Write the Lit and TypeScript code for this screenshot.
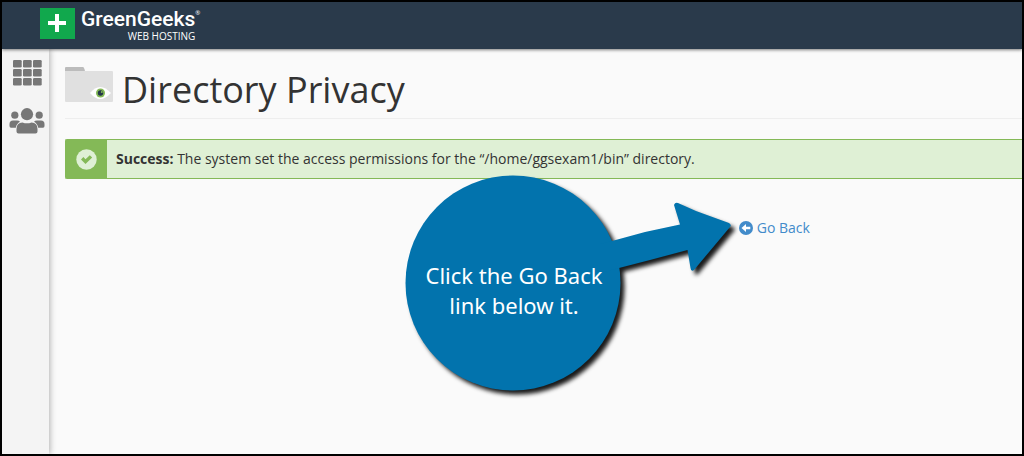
import { LitElement, html, css, svg } from "lit";
import { customElement, property } from "lit/decorators.js";

@customElement("site-header")
class SiteHeader extends LitElement {
  static styles = css`
    :host {
      display: flex;
      align-items: flex-start;
      padding: 6px 38px 0;
      height: 47px;
      box-sizing: border-box;
      background: #2a3a4b;
      color: #fff;
      position: relative;
      z-index: 2;
      box-shadow: 0 1px 3px rgba(0, 0, 0, 0.5);
    }
    .brand {
      display: flex;
      gap: 6px;
      color: inherit;
      text-decoration: none;
    }
    .mark {
      width: 35px;
      height: 31px;
      display: block;
    }
    .words {
      display: flex;
      flex-direction: column;
      align-items: flex-end;
    }
    .name {
      font: 500 21px/22px Roboto, sans-serif;
      display: flex;
    }
    .reg {
      font: 400 6px/8px "Open Sans", sans-serif;
      padding-top: 1px;
    }
    .tag {
      font: 400 10px/12px "Open Sans", sans-serif;
      padding-right: 5px;
    }
  `;
  render() {
    return html`
      <a class="brand" href="#">
        <svg class="mark" viewBox="0 0 35 31" aria-hidden="true">
          <rect width="35" height="31" fill="#11a84d" />
          <path d="M15 6h4v7h7v4h-7v7h-4v-7H8v-4h7z" fill="#fff" />
        </svg>
        <span class="words">
          <span class="name">GreenGeeks<span class="reg">®</span></span>
          <span class="tag">WEB HOSTING</span>
        </span>
      </a>
    `;
  }
}

@customElement("side-nav")
class SideNav extends LitElement {
  static styles = css`
    :host {
      display: flex;
      flex-direction: column;
      align-items: center;
      gap: 22px;
      padding: 11px 0 0 3px;
      background: #f4f4f4;
      box-shadow: 1px 0 6px rgba(0, 0, 0, 0.3);
    }
    .item {
      display: block;
      line-height: 0;
      color: #777;
    }
  `;
  render() {
    const cells = [0, 9, 18].flatMap((y) => [0, 10, 20].map((x) => ({ x, y })));
    return html`
      <a class="item" href="#" aria-label="Home">
        <svg width="29" height="26" viewBox="0 0 29 26" fill="currentColor">
          ${cells.map((c) => svg`<rect x=${c.x} y=${c.y} width="8.700" height="7.600" rx="1.300" />`)}
        </svg>
      </a>
      <a class="item" href="#" aria-label="User manager">
        <svg width="36" height="26" viewBox="0 0 36 26" fill="currentColor">
          <circle cx="18" cy="6.2" r="6.1" />
          <circle cx="5.800" cy="7.2" r="3.6" />
          <circle cx="30.200" cy="7.2" r="3.6" />
          <path d="M7.500 25V21q0-6.600 6-6.600q4.500 1.800 9 0q6 0 6 6.600v2.500q0 2-2 2h-17q-2 0-2-2z" />
          <path d="M.5 18.500V16q0-3.500 3.500-3.500h4q2 0 3 1.200q-3.500 1.800-4.200 6H2q-1.500 0-1.500-1.700zM35.500 18.500V16q0-3.500-3.500-3.500h-4q-2 0-3 1.200q3.500 1.800 4.200 6H34q1.500 0 1.500-1.700z" />
        </svg>
      </a>
    `;
  }
}

@customElement("success-alert")
class SuccessAlert extends LitElement {
  static styles = css`
    :host {
      display: flex;
      border: 1px solid #84b957;
      border-right: 0;
      border-radius: 2px 0 0 2px;
      background: #dff0d5;
      color: #333;
      font: 400 14px/20px "Open Sans", sans-serif;
    }
    .badge {
      display: grid;
      place-items: center;
      width: 41px;
      background: #84b957;
    }
    .message {
      padding: 9px;
      margin: 0;
    }
  `;
  render() {
    return html`
      <span class="badge">
        <svg width="21" height="21" viewBox="0 0 21 21" aria-hidden="true">
          <circle cx="10.500" cy="10.500" r="10.200" fill="#dff0d5" />
          <path d="M5 10.500l2.400-2.400L9.500 10.200l4.300-4 2.400 2.400-6.700 6.400z" fill="#84b957" />
        </svg>
      </span>
      <p class="message"><slot></slot></p>
    `;
  }
}

@customElement("step-callout")
class StepCallout extends LitElement {
  @property({ type: Array }) lines: string[] = [];
  static styles = css`
    :host {
      display: block;
      width: 344px;
      height: 234px;
    }
    .shape {
      display: block;
      width: 100%;
      height: 100%;
      filter: drop-shadow(4px 4px 2px rgba(0, 0, 0, 0.9));
    }
    .text {
      position: absolute;
      left: 6px;
      top: 90px;
      width: 216px;
      margin: 0;
      text-align: center;
      color: #fff;
      font: 400 22px/30px "Noto Sans", sans-serif;
    }
    .line {
      display: block;
      white-space: nowrap;
    }
  `;
  render() {
    return html`
      <svg class="shape" viewBox="0 0 344 234" fill="#0273ad" aria-hidden="true">
        <circle cx="113" cy="113" r="107.500" />
        <path d="M200 74L212 71L245 62L280 54.500L274 35Q275 32 278 33L296 41L329 53Q332 55 330 57L294 100Q291 102 290.500 98L287.500 80L250 90L219 98L200 103z" />
      </svg>
      <p class="text">${this.lines.map((l) => html`<span class="line">${l}</span>`)}</p>
    `;
  }
}

@customElement("app-root")
class AppRoot extends LitElement {
  static styles = css`
    :host {
      display: flex;
      flex-direction: column;
      box-sizing: border-box;
      min-height: 100vh;
      border: 2px solid #000;
      background: #fafafa;
      position: relative;
      overflow: hidden;
      font-family: "Open Sans", sans-serif;
    }
    .body {
      flex: 1;
      display: grid;
      grid-template-columns: 47px 1fr;
    }
    .content {
      padding: 16px 0 0 16px;
      min-width: 0;
    }
    .heading {
      display: flex;
      gap: 9px;
      padding-bottom: 4px;
      border-bottom: 1px solid #eee;
      margin-bottom: 20px;
    }
    .folder {
      margin-top: 2px;
      flex: none;
    }
    .title {
      margin: 0;
      color: #333;
      font: 400 36px/49px "Open Sans", sans-serif;
    }
    .actions {
      padding: 39px 0 0 70.4%;
    }
    .back {
      display: inline-flex;
      align-items: center;
      gap: 4px;
      color: #428bca;
      font-size: 14px;
      line-height: 20px;
      text-decoration: none;
      white-space: nowrap;
    }
    .callout {
      position: absolute;
      left: 398px;
      top: 168px;
      z-index: 3;
    }
  `;
  render() {
    return html`
      <site-header></site-header>
      <div class="body">
        <side-nav></side-nav>
        <main class="content">
          <header class="heading">
            <svg class="folder" width="48" height="36" viewBox="0 0 48 36" aria-hidden="true">
              <path d="M0 5V1q0-1 1-1h17q1 0 2 4v1z" fill="#bcbcbc" />
              <path d="M0 4h47q1 0 1 1v29q0 1-1 1H1q-1 0-1-1z" fill="#e0e0e0" />
              <path d="M25 26Q35 14 46 26Q35 38 25 26z" fill="#fff" />
              <circle cx="35.500" cy="26" r="4.500" fill="#84b957" />
              <circle cx="35.500" cy="26" r="2.700" fill="#24364a" />
              <circle cx="36.800" cy="25" r="1" fill="#84b957" />
            </svg>
            <h1 class="title">Directory Privacy</h1>
          </header>
          <success-alert>
            <strong>Success:</strong> The system set the access permissions for the “/home/ggsexam1/bin” directory.
          </success-alert>
          <div class="actions">
            <a class="back" href="#">
              <svg width="14" height="14" viewBox="0 0 14 14" aria-hidden="true">
                <circle cx="7" cy="7" r="7" fill="#428bca" />
                <path d="M2.500 7L7 3v2.700h4.300v2.600H7V11z" fill="#fff" />
              </svg>
              Go Back
            </a>
          </div>
        </main>
      </div>
      <step-callout class="callout" .lines=${["Click the Go Back", "link below it."]}></step-callout>
    `;
  }
}
